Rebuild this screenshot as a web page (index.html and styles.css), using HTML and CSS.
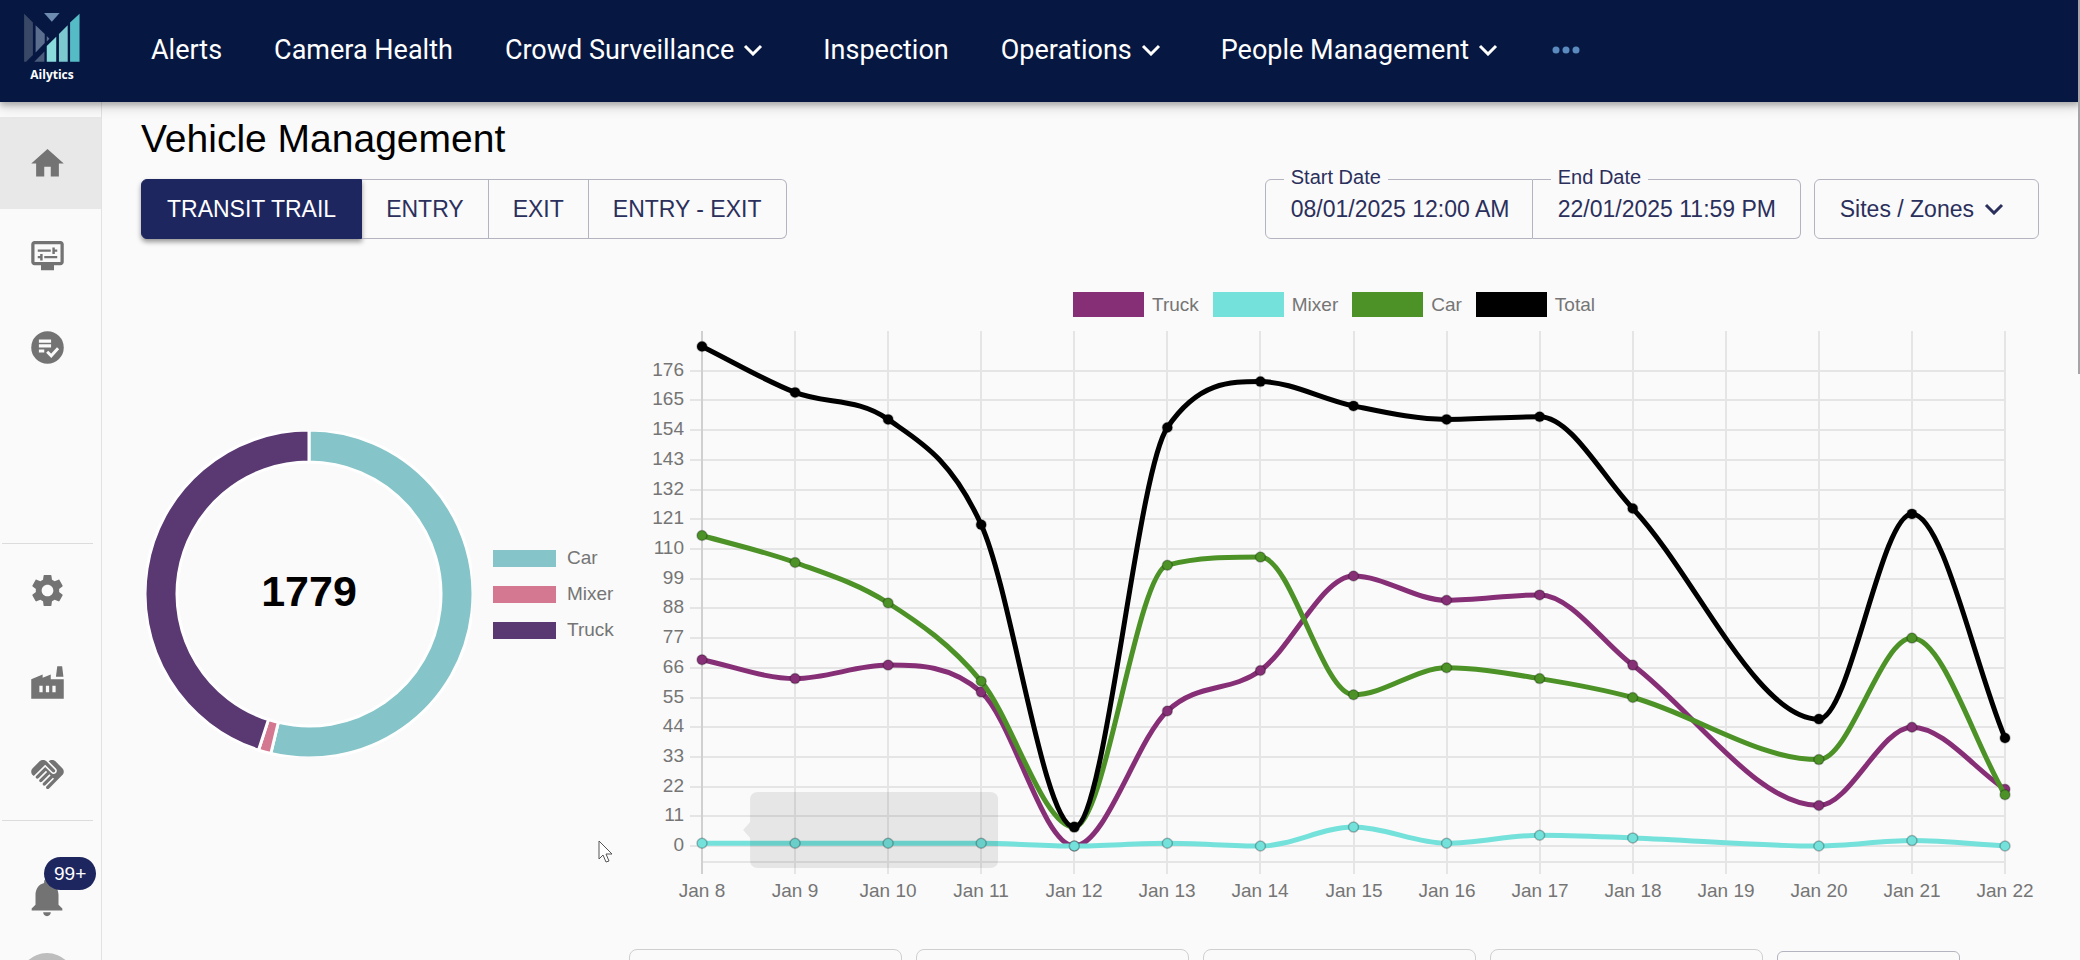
FILE: index.html
```html
<!DOCTYPE html>
<html lang="en">
  <head>
    <meta charset="UTF-8" />
    <meta name="viewport" content="width=device-width, initial-scale=1.0" />
    <title>Vehicle Management</title>
    <link rel="stylesheet" href="styles.css">
  </head>
  <body>
    <header class="topbar">
      <a class="logo" href="#">
        <svg width="56" height="49" viewBox="75 36 165 145" aria-hidden="true">
          <path fill="#3a4868" d="M75 38l26 26v96l-20 20h-6z" />
          <path fill="#5c6e8e" d="M109 72l27 26v27l-27 28zM142 104l8 8-8 8z" />
          <path fill="#4a5b7b" d="M105 180l30-30v30z" />
          <path fill="#6d8cb0" d="M134 36h46l-23 26z" />
          <path fill="#8adbdc" d="M142 134l28-28v74h-28z" />
          <path fill="#7cc8cf" d="M178 98l26-26v108h-26z" />
          <path fill="#55bcc6" d="M211 64l28-26v142h-28z" />
        </svg>
        <span>Ailytics</span>
      </a>
      <nav class="menu">
        <a href="#">Alerts</a>
        <a href="#">Camera Health</a>
        <a href="#">Crowd Surveillance <svg class="chevron" viewBox="0 0 20 12"><path d="M2 2l8 8 8-8" /></svg></a>
        <a href="#">Inspection</a>
        <a href="#">Operations <svg class="chevron" viewBox="0 0 20 12"><path d="M2 2l8 8 8-8" /></svg></a>
        <a href="#">People Management <svg class="chevron" viewBox="0 0 20 12"><path d="M2 2l8 8 8-8" /></svg></a>
        <button class="more" type="button" aria-label="More">
          <svg width="28" height="8" viewBox="0 0 28 8"><circle cx="4" cy="4" r="3.5" /><circle cx="14" cy="4" r="3.5" /><circle cx="24" cy="4" r="3.5" /></svg>
        </button>
      </nav>
    </header>

    <div class="shell">
      <aside class="sidebar">
        <a class="side-item active" href="#" aria-label="Home">
          <svg viewBox="0 0 24 24"><path d="M10 20v-6h4v6h5v-8h3L12 3 2 12h3v8z" /></svg>
        </a>
        <a class="side-item" href="#" aria-label="Display settings">
          <svg viewBox="0 0 24 24"><path d="M20 3H4c-1.1 0-2 .9-2 2v11c0 1.1.9 2 2 2h4v3h8v-3h4c1.1 0 2-.9 2-2V5c0-1.1-.9-2-2-2zm0 13H4V5h16v11z" /><path d="M6 8.25h8v1.5H6zM16.5 9.75H18v-1.5h-1.5V7H15v4h1.5zM10 12.25h8v1.5h-8zM7.5 15H9v-4H7.5v1.25H6v1.5h1.5z" /></svg>
        </a>
        <a class="side-item" href="#" aria-label="Checklist">
          <svg viewBox="0 0 24 24"><circle cx="12" cy="12" r="10" /><path fill="#fafafa" d="M6.7 7h7.5v2H6.7zM6.7 10h7.5v2H6.7zM6.7 13.2H10V15H6.7z" /><path fill="none" stroke="#fafafa" stroke-width="1.8" d="M11.8 14.6l2.5 2.5 4.2-4.6" /></svg>
        </a>
        <hr class="gap-before">
        <a class="side-item" href="#" aria-label="Settings">
          <svg viewBox="0 0 24 24"><path d="M19.14 12.94c.04-.3.06-.61.06-.94 0-.32-.02-.64-.07-.94l2.03-1.58c.18-.14.23-.41.12-.61l-1.92-3.32c-.12-.22-.37-.29-.59-.22l-2.39.96c-.5-.38-1.03-.7-1.62-.94l-.36-2.54c-.04-.24-.24-.41-.48-.41h-3.84c-.24 0-.43.17-.47.41l-.36 2.54c-.59.24-1.13.57-1.62.94l-2.39-.96c-.22-.08-.47 0-.59.22L2.74 8.87c-.12.21-.08.47.12.61l2.03 1.58c-.05.3-.09.63-.09.94s.02.64.07.94l-2.03 1.58c-.18.14-.23.41-.12.61l1.92 3.32c.12.22.37.29.59.22l2.39-.96c.5.38 1.03.7 1.62.94l.36 2.54c.05.24.24.41.48.41h3.84c.24 0 .44-.17.47-.41l.36-2.54c.59-.24 1.13-.56 1.62-.94l2.39.96c.22.08.47 0 .59-.22l1.92-3.32c.12-.22.07-.47-.12-.61l-2.01-1.58zM12 15.6c-1.98 0-3.6-1.62-3.6-3.6s1.62-3.6 3.6-3.6 3.6 1.62 3.6 3.6-1.62 3.6-3.6 3.6z" /></svg>
        </a>
        <a class="side-item" href="#" aria-label="Sites">
          <svg viewBox="0 0 24 24"><path d="M22 10v12H2V10l7-3v2l5-2v3h8zm-4.8-1.5L18 2h3l.8 6.5h-4.6zM11 18h2v-4h-2v4zm-4 0h2v-4H7v4zm10-4h-2v4h2v-4z" /></svg>
        </a>
        <a class="side-item" href="#" aria-label="Partners">
          <svg viewBox="0 0 24 24"><path d="M16.48 10.41c-.39.39-1.04.39-1.43 0l-4.47-4.46-7.05 7.04-.66-.63c-1.17-1.17-1.17-3.07 0-4.24l4.24-4.24c1.17-1.17 3.07-1.17 4.24 0L16.48 9c.39.39.39 1.02 0 1.41zm.7-2.12c.78.78.78 2.05 0 2.83-1.27 1.27-2.61.22-2.83 0l-3.76-3.76-5.57 5.57c-.39.39-.39 1.02 0 1.41.39.39 1.02.39 1.42 0l4.62-4.62.71.71-4.62 4.62c-.39.39-.39 1.02 0 1.41.39.39 1.02.39 1.42 0l4.62-4.62.71.71-4.62 4.62c-.39.39-.39 1.02 0 1.41.39.39 1.02.39 1.41 0l4.62-4.62.71.71-4.62 4.62c-.39.39-.39 1.02 0 1.41.39.39 1.02.39 1.41 0l8.32-8.34c1.17-1.17 1.17-3.07 0-4.24l-4.24-4.24c-1.15-1.15-3.01-1.17-4.18-.06l4.47 4.47z" /></svg>
        </a>
        <hr>
        <a class="side-item bell" href="#" aria-label="Notifications">
          <svg viewBox="0 0 24 24"><path d="M12 22c1.1 0 2-.9 2-2h-4c0 1.1.89 2 2 2zm6-6v-5c0-3.07-1.64-5.64-4.5-6.32V4c0-.83-.67-1.5-1.5-1.5s-1.5.67-1.5 1.5v.68C7.63 5.36 6 7.92 6 11v5l-2 2v1h16v-1l-2-2z" /></svg>
          <span class="badge">99+</span>
        </a>
        <a class="avatar" href="#" aria-label="Account"></a>
      </aside>

      <main class="content">
        <h1>Vehicle Management</h1>
        <div class="toolbar">
          <div class="tabs">
            <button class="selected" type="button">TRANSIT TRAIL</button>
            <button type="button">ENTRY</button>
            <button type="button">EXIT</button>
            <button type="button">ENTRY - EXIT</button>
          </div>
          <div class="filters">
            <div class="dates">
              <div class="field">
                <label for="start">Start Date</label>
                <input id="start" type="text" value="08/01/2025 12:00 AM" />
              </div>
              <div class="field">
                <label for="end">End Date</label>
                <input id="end" type="text" value="22/01/2025 11:59 PM" />
              </div>
            </div>
            <button class="sites" type="button">
              Sites / Zones <svg class="chevron" viewBox="0 0 20 12"><path d="M2 2l8 8 8-8" /></svg>
            </button>
          </div>
        </div>

        <div class="charts">
          <section class="share">
            <div class="donut">
              <svg id="donut" viewBox="-163 -163 326 326"></svg>
              <strong class="donut-total">1779</strong>
            </div>
            <ul class="share-legend">
              <li><i class="share-car"></i>Car</li>
              <li><i class="share-mixer"></i>Mixer</li>
              <li><i class="share-truck"></i>Truck</li>
            </ul>
          </section>

          <section class="trend">
            <ul class="trend-legend">
              <li><i class="line-truck"></i>Truck</li>
              <li><i class="line-mixer"></i>Mixer</li>
              <li><i class="line-car"></i>Car</li>
              <li><i class="line-total"></i>Total</li>
            </ul>
            <svg id="trend"></svg>
            <div class="cards">
              <div class="card"></div>
              <div class="card"></div>
              <div class="card"></div>
              <div class="card"></div>
              <button class="card-button" type="button" aria-label="Export"></button>
            </div>
          </section>
        </div>
      </main>
    </div>

    <svg class="cursor" width="16" height="24" viewBox="0 0 16 24"><path d="M1 1v18l4-4 3 7 3-1-3-7h6z" /></svg>
    <div class="scroll-thumb"></div>

    <script src="charts.js"></script>
  </body>
</html>
```
FILE: styles.css
```css
* {
  box-sizing: border-box;
}

body {
  margin: 0;
  height: 100vh;
  overflow: hidden;
  display: flex;
  flex-direction: column;
  font-family: "Liberation Sans", Arial, sans-serif;
  background: #fafafa;
}

button,
input {
  font: inherit;
  color: inherit;
}

a {
  color: inherit;
  text-decoration: none;
}

ul {
  list-style: none;
  margin: 0;
  padding: 0;
}

.chevron {
  width: 20px;
  height: 12px;
  fill: none;
  stroke: currentColor;
  stroke-width: 3;
}

/* top bar */
.topbar {
  flex: none;
  position: relative;
  z-index: 1;
  height: 102px;
  display: flex;
  align-items: center;
  color: #fff;
  background: #061842;
  box-shadow: 0 3px 6px rgba(0, 0, 0, 0.25), 0 6px 12px rgba(0, 0, 0, 0.12);
}

.logo {
  width: 104px;
  height: 77px;
  display: flex;
  flex-direction: column;
  align-items: center;
  gap: 5px;
  font: bold 12px/16px "Open Sans", sans-serif;
}

.menu {
  display: flex;
  align-items: center;
  gap: 52px;
  padding: 0 0 3px 47px;
  font: 27px/32px Roboto, sans-serif;
}

.menu a {
  display: flex;
  align-items: center;
  gap: 9px;
  white-space: nowrap;
}

.menu .chevron {
  margin-right: 8px;
}

.more {
  display: flex;
  margin-left: -6px;
  padding: 0;
  border: 0;
  background: none;
}

.more svg {
  fill: #5b8abf;
}

/* sidebar */
.shell {
  flex: 1;
  min-height: 0;
  display: flex;
}

.sidebar {
  flex: none;
  width: 102px;
  padding-top: 15px;
  border-right: 1px solid #e2e2e2;
}

.side-item {
  height: 92px;
  padding-right: 7px;
  display: flex;
  align-items: center;
  justify-content: center;
}

.side-item svg {
  width: 39px;
  height: 39px;
  fill: #737373;
}

.side-item.active {
  background: #e8e8e9;
}

.sidebar hr {
  margin: 0 8px 0 2px;
  border: 0;
  border-top: 1px solid #dcdcdc;
}

.sidebar .gap-before {
  margin-top: 150px;
}

.bell {
  position: relative;
  height: 132px;
  padding-top: 20px;
}

.side-item.bell svg {
  width: 46px;
  height: 46px;
}

.badge {
  position: absolute;
  top: 36px;
  left: 44px;
  padding: 0 10px;
  border-radius: 17px;
  color: #fff;
  background: #1e265f;
  font-size: 19px;
  line-height: 33px;
}

.avatar {
  display: block;
  width: 56px;
  height: 56px;
  margin-left: 19px;
  border-radius: 50%;
  background: #bdbdbd;
}

/* content */
.content {
  flex: 1;
  min-width: 0;
  padding: 12px 41px 0 39px;
}

h1 {
  margin: 0 0 15px;
  font-size: 39px;
  font-weight: normal;
  line-height: 50px;
}

.toolbar {
  display: flex;
  justify-content: space-between;
  color: #2b2f5c;
  font-size: 23px;
}

.tabs,
.filters,
.dates {
  display: flex;
}

.tabs button,
.sites {
  height: 60px;
  padding: 0 24px;
  border: 1px solid #b3b4c0;
  background: none;
  white-space: nowrap;
}

.tabs button + button {
  border-left: 0;
}

.tabs button:first-child {
  border-radius: 6px 0 0 6px;
}

.tabs button:last-child {
  border-radius: 0 6px 6px 0;
}

.tabs .selected {
  padding: 0 25px;
  color: #fff;
  border-color: #1e265f;
  background: #1e265f;
  box-shadow: 0 3px 5px rgba(0, 0, 0, 0.4);
}

.filters {
  gap: 13px;
}

.field {
  position: relative;
  width: 268px;
  height: 60px;
  border: 1px solid #b3b4c0;
  border-radius: 6px 0 0 6px;
}

.field + .field {
  border-left: 0;
  border-radius: 0 6px 6px 0;
}

.field label {
  position: absolute;
  top: -15px;
  left: 18px;
  padding: 0 7px;
  background: #fafafa;
  font-size: 20px;
  line-height: 24px;
}

.field input {
  width: 100%;
  height: 100%;
  padding: 0 0 0 25px;
  border: 0;
  background: none;
}

.sites {
  display: flex;
  align-items: center;
  gap: 10px;
  padding: 0 34px 0 25px;
  border-radius: 6px;
}

/* charts */
.charts {
  display: flex;
  color: #757575;
  font-size: 19px;
}

.share {
  flex: none;
  width: 488px;
  height: 518px;
  padding: 192px 0 0 5px;
  display: flex;
  align-items: center;
  gap: 21px;
}

.donut {
  display: grid;
  place-items: center;
}

.donut svg,
.donut-total {
  grid-area: 1 / 1;
}

.donut svg {
  width: 326px;
  height: 326px;
}

.donut path {
  stroke: #fff;
  stroke-width: 3;
}

.donut-total {
  padding-bottom: 6px;
  color: #000;
  font-size: 43px;
}

.share-legend li,
.trend-legend li {
  display: flex;
  align-items: center;
}

.share-legend li {
  height: 36px;
  gap: 11px;
}

.share-legend i {
  width: 63px;
  height: 17px;
}

.trend {
  flex: 1;
  min-width: 0;
  padding-top: 53px;
}

.trend-legend {
  display: flex;
  justify-content: center;
  gap: 14px;
}

.trend-legend li {
  gap: 8px;
}

.trend-legend i {
  width: 71px;
  height: 25px;
}

.share-car {
  background: #85c4c8;
}

.share-mixer {
  background: #d37890;
}

.share-truck {
  background: #5a3973;
}

.line-truck {
  background: #862f76;
}

.line-mixer {
  background: #74e1db;
}

.line-car {
  background: #4c9227;
}

.line-total {
  background: #000;
}

#trend {
  display: block;
  width: 100%;
  height: 590px;
}

#trend text {
  fill: #757575;
  font-size: 19px;
}

.cards {
  display: flex;
  gap: 14px;
  padding-top: 42px;
}

.card {
  flex: 0 1 273px;
  height: 80px;
  border: 1px solid #cfcfcf;
  border-radius: 8px;
}

.card-button {
  flex: 0 1 183px;
  height: 60px;
  margin-top: 2px;
  border: 1px solid #b3b4c0;
  border-radius: 6px;
  background: none;
}

.cursor {
  position: fixed;
  left: 598px;
  top: 840px;
  fill: #fff;
  stroke: #555;
}

.scroll-thumb {
  position: fixed;
  top: 0;
  right: 0;
  z-index: 2;
  width: 2px;
  height: 39vh;
  background: #a5a5a8;
}
```
FILE: charts.js
```js
const days = [8, 9, 10, 11, 12, 13, 14, 15, 16, 17, 18, 20, 21, 22];

const series = [
  { color: "#862f76", values: [69, 62, 67, 57, 0, 50, 65, 100, 91, 93, 67, 15, 44, 21] },
  { color: "#4c9227", values: [115, 105, 90, 61, 7, 104, 107, 56, 66, 62, 55, 32, 77, 19] },
  { color: "#000", values: [185, 168, 158, 119, 7, 155, 172, 163, 158, 159, 125, 47, 123, 40] },
  { color: "#74e1db", values: [1, 1, 1, 1, 0, 1, 0, 7, 1, 4, 3, 0, 2, 0] },
];

// monotone cubic curve through the points
function curve(pts) {
  const n = pts.length;
  const slope = [];
  for (let i = 0; i < n - 1; i++) {
    slope.push((pts[i + 1].y - pts[i].y) / (pts[i + 1].x - pts[i].x));
  }
  const m = [slope[0]];
  for (let i = 1; i < n - 1; i++) {
    m.push(slope[i - 1] * slope[i] <= 0 ? 0 : (slope[i - 1] + slope[i]) / 2);
  }
  m.push(slope[n - 2]);
  for (let i = 0; i < n - 1; i++) {
    if (slope[i] === 0) {
      m[i] = m[i + 1] = 0;
      continue;
    }
    const a = m[i] / slope[i];
    const b = m[i + 1] / slope[i];
    const sq = a * a + b * b;
    if (sq > 9) {
      const tau = 3 / Math.sqrt(sq);
      m[i] = a * tau * slope[i];
      m[i + 1] = b * tau * slope[i];
    }
  }
  let d = `M${pts[0].x} ${pts[0].y}`;
  for (let i = 0; i < n - 1; i++) {
    const p = pts[i];
    const q = pts[i + 1];
    const dx = (q.x - p.x) / 3;
    d += `C${p.x + dx} ${p.y + m[i] * dx} ${q.x - dx} ${q.y - m[i + 1] * dx} ${q.x} ${q.y}`;
  }
  return d;
}

function drawTrend() {
  const svg = document.querySelector("#trend");
  const left = 73;
  const right = svg.clientWidth - 34;
  const top = 14;
  const bottom = 544;
  const x = (day) => left + ((day - 8) * (right - left)) / 14;
  const y = (value) => 529 - value * 2.7;
  let out = "";

  for (let v = 0; v <= 176; v += 11) {
    const gy = Math.round(y(v));
    out += `<rect x="${left - 12}" y="${gy - 1}" width="${right - left + 12}" height="2" fill="#e5e5e5"/>`;
    out += `<text x="${left - 18}" y="${gy + 5}" text-anchor="end">${v}</text>`;
  }
  out += `<rect x="${left}" y="${bottom}" width="${right - left}" height="2" fill="#e5e5e5"/>`;

  for (let day = 8; day <= 22; day++) {
    const gx = Math.round(x(day));
    out += `<rect x="${gx - 1}" y="${top}" width="2" height="${bottom - top + 13}" fill="${day === 8 ? "#d0d0d0" : "#e5e5e5"}"/>`;
    out += `<text x="${gx}" y="580" text-anchor="middle">Jan ${day}</text>`;
  }

  for (const s of series) {
    const pts = s.values.map((v, i) => ({ x: x(days[i]), y: y(v) }));
    out += `<path d="${curve(pts)}" fill="none" stroke="${s.color}" stroke-width="5"/>`;
    for (const p of pts) {
      out += `<circle cx="${p.x}" cy="${p.y}" r="5" fill="${s.color}" stroke="rgba(0,0,0,0.25)" stroke-width="1.5"/>`;
    }
  }

  // fading tooltip over Jan 9 - Jan 11
  const tx = x(9) - 45;
  out += `<path d="M${tx + 8} 475h232q8 0 8 8v60q0 8-8 8h-232q-8 0-8-8v-22l-7-8 7-8v-22q0-8 8-8z" fill="rgba(0,0,0,0.08)"/>`;
  svg.innerHTML = out;
}

function drawDonut() {
  const parts = [
    { color: "#85c4c8", value: 956 },
    { color: "#d37890", value: 22 },
    { color: "#5a3973", value: 801 },
  ];
  const point = (r, a) => `${r * Math.sin(a)} ${-r * Math.cos(a)}`;
  let from = 0;
  let out = "";
  for (const part of parts) {
    const to = from + (part.value / 1779) * Math.PI * 2;
    const big = to - from > Math.PI ? 1 : 0;
    out += `<path fill="${part.color}" d="M${point(164, from)}A164 164 0 ${big} 1 ${point(164, to)}L${point(132, to)}A132 132 0 ${big} 0 ${point(132, from)}z"/>`;
    from = to;
  }
  document.querySelector("#donut").innerHTML = out;
}

drawDonut();
drawTrend();
window.addEventListener("resize", drawTrend);
```
